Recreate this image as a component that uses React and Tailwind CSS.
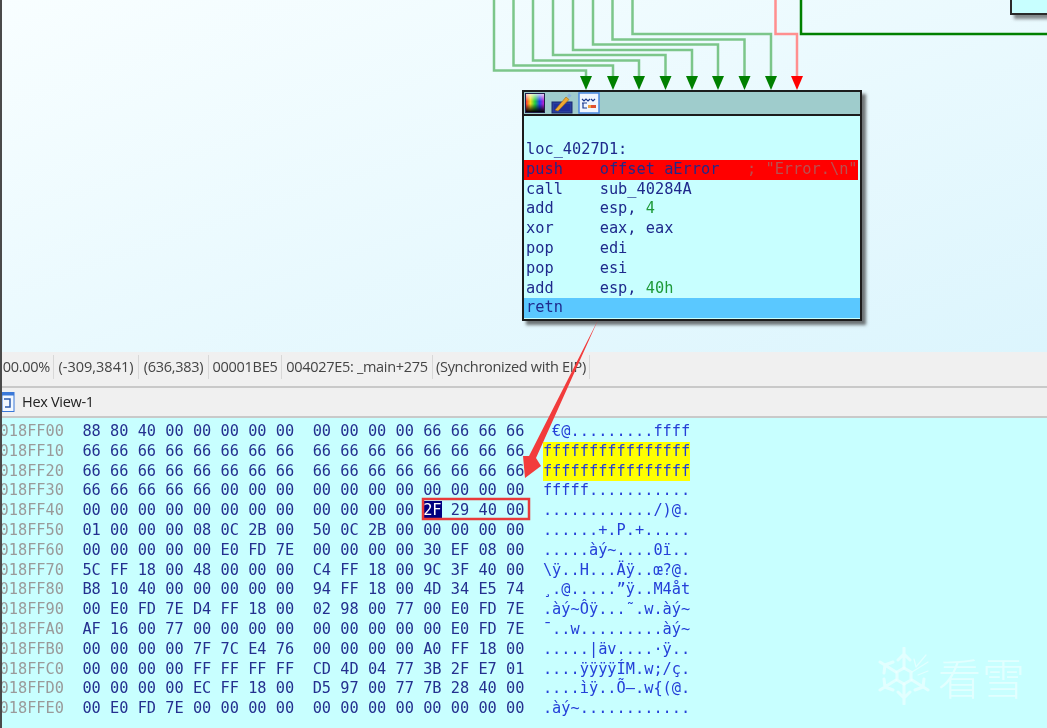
import React from 'react';

const mono = 'font-["DejaVu_Sans_Mono",monospace]';

const hexRows = [
  ['018FF00', '88 80 40 00 00 00 00 00  00 00 00 00 66 66 66 66', 'ˆ€@.........ffff'],
  ['018FF10', '66 66 66 66 66 66 66 66  66 66 66 66 66 66 66 66', 'ffffffffffffffff', true],
  ['018FF20', '66 66 66 66 66 66 66 66  66 66 66 66 66 66 66 66', 'ffffffffffffffff', true],
  ['018FF30', '66 66 66 66 66 00 00 00  00 00 00 00 00 00 00 00', 'fffff...........'],
  ['018FF40', '00 00 00 00 00 00 00 00  00 00 00 00 ', '............/)@.'],
  ['018FF50', '01 00 00 00 08 0C 2B 00  50 0C 2B 00 00 00 00 00', '......+.P.+.....'],
  ['018FF60', '00 00 00 00 00 E0 FD 7E  00 00 00 00 30 EF 08 00', '.....àý~....0ï..'],
  ['018FF70', '5C FF 18 00 48 00 00 00  C4 FF 18 00 9C 3F 40 00', '\\ÿ..H...Äÿ..œ?@.'],
  ['018FF80', 'B8 10 40 00 00 00 00 00  94 FF 18 00 4D 34 E5 74', '¸.@.....”ÿ..M4åt'],
  ['018FF90', '00 E0 FD 7E D4 FF 18 00  02 98 00 77 00 E0 FD 7E', '.àý~Ôÿ...˜.w.àý~'],
  ['018FFA0', 'AF 16 00 77 00 00 00 00  00 00 00 00 00 E0 FD 7E', '¯..w.........àý~'],
  ['018FFB0', '00 00 00 00 7F 7C E4 76  00 00 00 00 A0 FF 18 00', '.....|äv....·ÿ..'],
  ['018FFC0', '00 00 00 00 FF FF FF FF  CD 4D 04 77 3B 2F E7 01', '....ÿÿÿÿÍM.w;/ç.'],
  ['018FFD0', '00 00 00 00 EC FF 18 00  D5 97 00 77 7B 28 40 00', '....ìÿ..Õ—.w{(@.'],
  ['018FFE0', '00 E0 FD 7E 00 00 00 00  00 00 00 00 00 00 00 00', '.àý~............'],
];

const greenEdges = [
  'M494 0V70.5H586V80',
  'M513.5 0V65.5H613V80',
  'M533 0V60.5H639V80',
  'M553 0V55H665.5V80',
  'M573 0V50H692V80',
  'M593 0V44.5H718V80',
  'M612.5 0V39.5H744.5V80',
  'M632.5 0V34H771V80',
];
const arrowXs = [586, 613, 639, 665.5, 692, 718, 744.5, 771];

const statusCells = [
  ['00.00%', 'w-[54px] justify-end pr-[3px] tracking-[-0.3px]'],
  ['(-309,3841)', 'w-[85px] justify-center tracking-[0px]'],
  ['(636,383)', 'w-[70px] justify-center tracking-[-0.3px]'],
  ['00001BE5', 'w-[73px] justify-center tracking-[-0.3px]'],
  ['004027E5: _main+275', 'w-[151px] justify-center tracking-[-0.3px]'],
  ['(Synchronized with EIP)', 'w-[157px] justify-center tracking-[-0.3px]'],
];

const ColorIcon = () => (
  <svg width="22" height="22" viewBox="0 0 22 22">
    <defs>
      <linearGradient id="rainbow" x1="0" y1="0" x2="1" y2="0">
        <stop offset="0" stopColor="#ff3030" />
        <stop offset="0.25" stopColor="#f0e020" />
        <stop offset="0.5" stopColor="#20d040" />
        <stop offset="0.75" stopColor="#2040f0" />
        <stop offset="1" stopColor="#c020d0" />
      </linearGradient>
      <linearGradient id="shade" x1="0" y1="0" x2="0" y2="1">
        <stop offset="0" stopColor="#fff" stopOpacity="0.75" />
        <stop offset="0.4" stopColor="#fff" stopOpacity="0" />
        <stop offset="0.55" stopColor="#000" stopOpacity="0" />
        <stop offset="1" stopColor="#000" stopOpacity="1" />
      </linearGradient>
    </defs>
    <rect x="1" y="1" width="20" height="20" fill="#20204a" />
    <rect x="2" y="2" width="18" height="18" fill="url(#rainbow)" />
    <rect x="2" y="2" width="18" height="18" fill="url(#shade)" />
  </svg>
);

const PencilIcon = () => (
  <svg width="22" height="22" viewBox="0 0 22 22">
    <rect x="1" y="10" width="20" height="11" fill="#2a3f9e" stroke="#1a2a70" />
    <rect x="3" y="12" width="16" height="7" fill="#20309a" />
    <path d="M4 18L15 5L18 7.500L7 19Z" fill="#f0a830" stroke="#a06a10" strokeWidth="0.6" />
    <path d="M16 4L18 1.500L20.500 3.500L18.500 6Z" fill="#8ab4e0" />
  </svg>
);

const GraphIcon = () => (
  <svg width="22" height="22" viewBox="0 0 22 22">
    <rect x="1" y="1" width="20" height="20" fill="#f0f6ff" stroke="#4a88e0" strokeWidth="1.500" />
    <path d="M4 7L6 9L8 7L10 9L12 7M13 7L15 9L17 7M4 11H9M5 11V16H9" fill="none" stroke="#1a3a90" strokeWidth="1.200" />
    <rect x="10" y="13" width="8" height="3" fill="#e05030" />
    <rect x="10" y="13" width="3" height="3" fill="#f0a040" />
  </svg>
);

const Code = ({ children, className = '' }) => (
  <div className={`h-[19.8px] whitespace-pre pl-[2px] leading-[19.800px] ${className}`}>{children}</div>
);

const GraphNode = () => (
  <div className={`absolute left-[522px] top-[90px] h-[231px] w-[340px] border-2 border-[#1c1c1c] bg-[#c8ffff] text-[15.3px] text-[#1f2a8c] shadow-[4px_4px_3px_rgba(60,60,60,0.7)] ${mono}`}>
    <div className="flex h-[24px] items-center gap-[5px] border-b-2 border-[#1c1c1c] bg-[#9fcccc]">
      <ColorIcon />
      <PencilIcon />
      <GraphIcon />
    </div>
    <div className="pt-[24px]">
      <Code>loc_4027D1:</Code>
      <Code className="mr-[2px] bg-[#ff0000]">
        push    offset aError   <span className="text-[#b85050]">; "Error.\n"</span>
      </Code>
      <Code>call    sub_40284A</Code>
      <Code>add     esp, <span className="text-[#1e9a3a]">4</span></Code>
      <Code>xor     eax, eax</Code>
      <Code>pop     edi</Code>
      <Code>pop     esi</Code>
      <Code>add     esp, <span className="text-[#1e9a3a]">40h</span></Code>
      <Code className="bg-[#5ac8ff]">retn</Code>
    </div>
  </div>
);

const HexRow = ({ row }) => {
  const [addr, hex, ascii, yellow] = row;
  return (
    <div className="h-[19.8px] whitespace-pre leading-[19.800px]">
      <span className="text-[#9a9a9a]">{addr}  </span>
      <span className="text-[#24308f]">{hex}</span>
      {addr === '018FF40' && (
        <>
          <span className="bg-[#000080] text-white">2F</span>
          <span className="text-[#24308f]"> 29 40 00</span>
        </>
      )}
      <span>  </span>
      <span className={`inline-block h-[19.8px] text-[#2540d8] ${yellow ? 'bg-[#ffff00]' : ''}`}>{ascii}</span>
    </div>
  );
};

const Snowflake = () => (
  <svg width="52" height="58" viewBox="0 0 52 58" fill="none" stroke="#fff" strokeOpacity="0.6" strokeWidth="3" strokeLinecap="round">
    <path d="M26 1V21M26 37V57M26 7L20 13M26 7L32 13M26 51L20 45M26 51L32 45" />
    <path d="M2 15L18 25M34 33L50 43M7 18L6 26M7 18L15 15M45 40L46 32M45 40L37 43" />
    <path d="M2 43L18 33M7 40L6 32M7 40L15 43" />
    <path d="M34 25L50 15M38 20L48 8M40 28L50 24M36 12L38 20" strokeWidth="1.200" />
    <path d="M26 21L33 25V33L26 37L19 33V25Z" />
  </svg>
);

const App = () => {
  return (
    <div className="relative flex h-[728px] w-[1047px] flex-col overflow-hidden bg-[#c8ffff] blur-[0.35px]">
      {/* graph view */}
      <div className="relative h-[352px] shrink-0 bg-gradient-to-br from-[#f8feff] to-[#dcf5fd]">
        <div className="absolute right-0 top-0 h-[15px] w-[37px] border-b-2 border-l-2 border-[#2a2a2a] bg-[#c8ffff] shadow-[4px_4px_3px_rgba(60,60,60,0.6)]" />
        <svg className="absolute left-0 top-0" width="1047" height="100" fill="none">
          {greenEdges.map((d) => (
            <path key={d} d={d} stroke="#7cc68a" strokeWidth="2.500" />
          ))}
          <path d="M775.500 0V34H797V80" stroke="#ff8f8f" strokeWidth="2.500" />
          <path d="M801 0V34H1047" stroke="#008000" strokeWidth="2.500" />
          {arrowXs.map((x) => (
            <path key={x} d={`M${x - 6} 76H${x + 6}L${x + 3} 83L${x} 90L${x - 3} 83Z`} fill="#008000" />
          ))}
          <path d="M791 76H803L800 83L797 90L794 83Z" fill="#ff0000" />
        </svg>
        <GraphNode />
      </div>

      {/* status line */}
      <div className="flex h-[34px] shrink-0 items-start overflow-hidden bg-[#f0f0f0] pt-[3px] font-['Open_Sans',sans-serif] text-[14.5px] text-[#444]">
        {statusCells.map(([text, cls]) => (
          <div key={text} className={`flex h-[24px] items-center whitespace-nowrap border-r border-[#d8d8d8] ${cls}`}>
            {text}
          </div>
        ))}
      </div>

      {/* hex view tab */}
      <div className="flex h-[32px] shrink-0 items-center gap-[7px] border-y-2 border-[#c9c9c9] bg-[#f0f0f0] font-['Open_Sans',sans-serif] text-[14.5px] tracking-[-0.3px] text-[#222]">
        <svg width="14" height="20" viewBox="0 0 14 20" fill="none" className="ml-[1px]">
          <rect x="1" y="0.500" width="12" height="19" fill="#f2f8ff" stroke="#3a78d8" />
          <rect x="1" y="0.500" width="12" height="3" fill="#3a78d8" />
          <path d="M3 7H9V15H4" stroke="#2a5ab0" strokeWidth="1.500" />
        </svg>
        <span>Hex View-1</span>
      </div>

      {/* hex dump */}
      <div className={`-ml-[9.700px] flex-1 overflow-hidden pt-[4px] text-[15.3px] ${mono}`}>
        <div className="pl-[9.200px]">
          {hexRows.map((row) => (
            <HexRow key={row[0]} row={row} />
          ))}
        </div>
      </div>

      {/* left window edge */}
      <div className="absolute bottom-0 left-0 top-0 w-[2px] bg-[#4a4a4a]" />

      {/* annotation drawn over the screenshot */}
      <svg className="absolute left-0 top-0" width="1047" height="728" fill="none">
        <path d="M598 320L536 458L541 466L525 478L523 456L529 456Z" fill="#f23c3c" />
        <rect x="423" y="499" width="106" height="20" stroke="#e83a3a" strokeWidth="2.500" />
      </svg>

      {/* watermark */}
      <div className="absolute left-[878px] top-[647px] flex items-center gap-[8px] opacity-80">
        <Snowflake />
        <span className="font-['Noto_Sans_CJK_SC',sans-serif] text-[43px] font-extralight leading-none tracking-[1px] text-white/60">看雪</span>
      </div>
    </div>
  );
};

export default App;
